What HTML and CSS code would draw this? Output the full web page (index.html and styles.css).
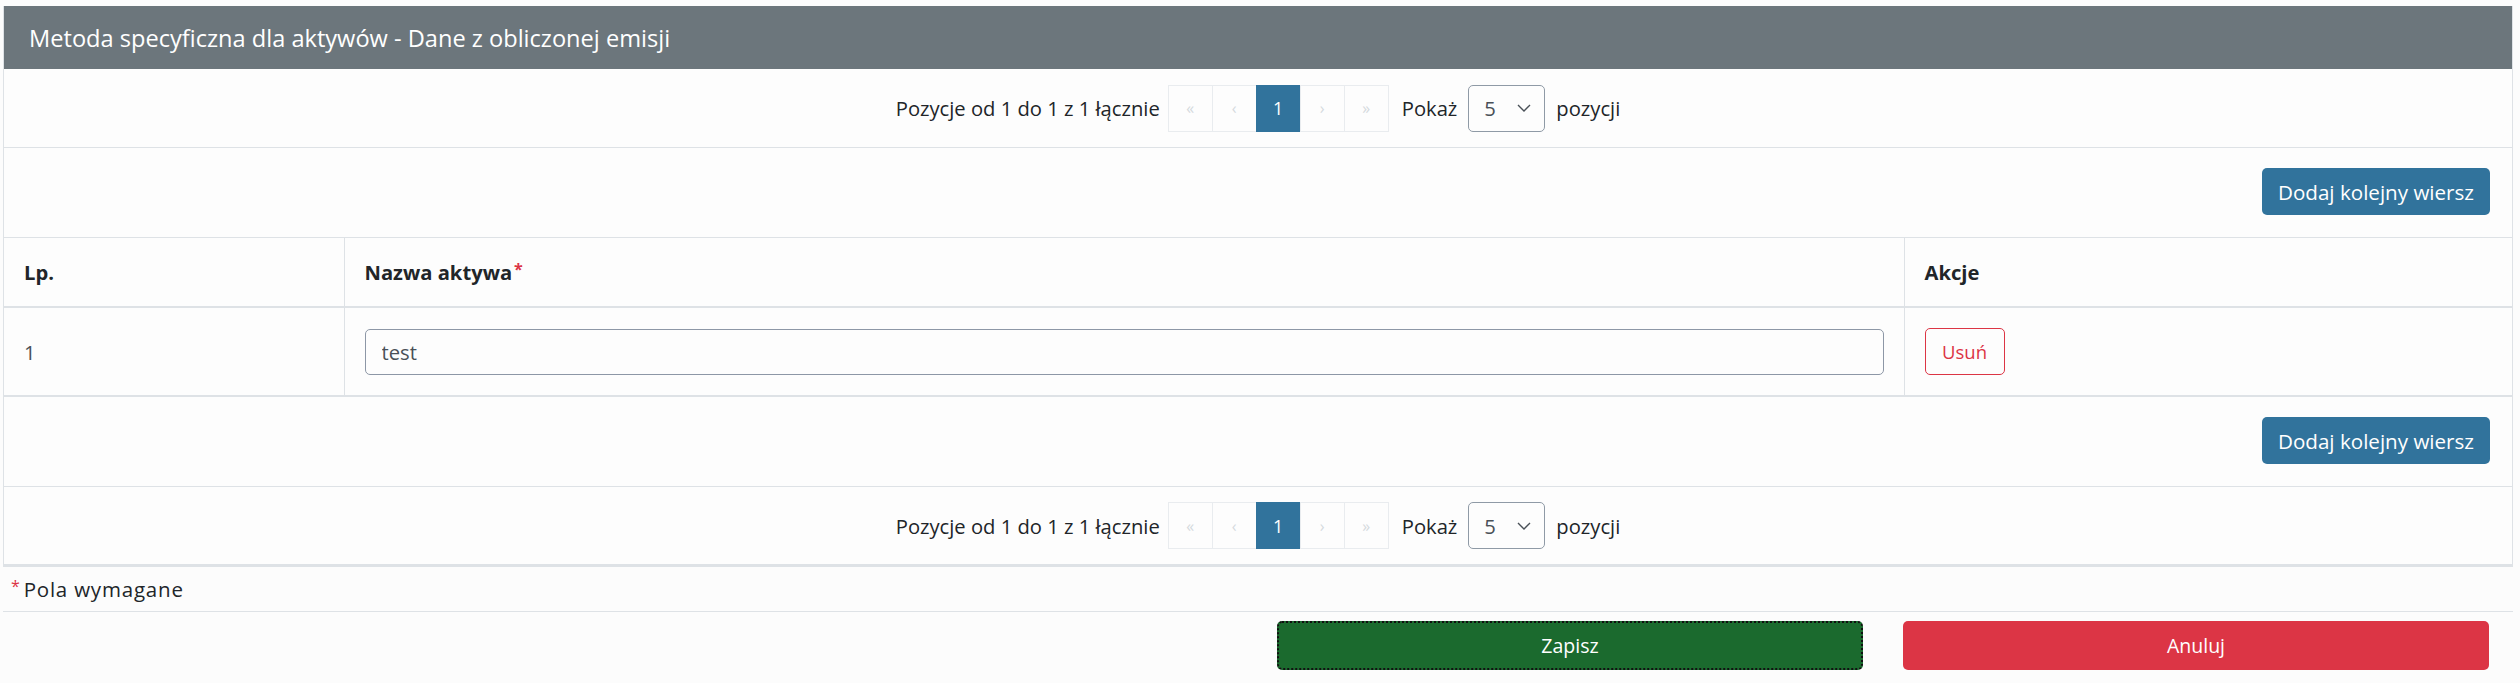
FILE: index.html
```html
<!DOCTYPE html>
<html lang="pl">
<head>
    <meta charset="UTF-8">
    <meta name="viewport" content="width=device-width, initial-scale=1.0">
    <title>Metoda specyficzna dla aktywów</title>
    <link rel="stylesheet" href="styles.css">
</head>
<body>
    <div class="panel">
        <div class="panel-heading">Metoda specyficzna dla aktywów - Dane z obliczonej emisji</div>

        <div class="pager-row">
            <span class="pager-info">Pozycje od 1 do 1 z 1 łącznie</span>
            <ul class="pagination">
                <li class="disabled">&laquo;</li>
                <li class="disabled">&lsaquo;</li>
                <li class="active">1</li>
                <li class="disabled">&rsaquo;</li>
                <li class="disabled">&raquo;</li>
            </ul>
            <span>Pokaż</span>
            <div class="page-size">
                <span>5</span>
                <svg width="14" height="8" viewBox="0 0 14 8"><path d="M1 1l6 6 6-6" fill="none" stroke="#495057" stroke-width="1.4"/></svg>
            </div>
            <span>pozycji</span>
        </div>

        <div class="actions-row">
            <button class="btn btn-primary">Dodaj kolejny wiersz</button>
        </div>

        <table class="grid">
            <colgroup>
                <col class="col-lp">
                <col>
                <col class="col-actions">
            </colgroup>
            <thead>
                <tr>
                    <th>Lp.</th>
                    <th>Nazwa aktywa<sup class="req">*</sup></th>
                    <th>Akcje</th>
                </tr>
            </thead>
            <tbody>
                <tr>
                    <td>1</td>
                    <td><input type="text" class="text-input" value="test"></td>
                    <td><button class="btn btn-outline-danger">Usuń</button></td>
                </tr>
            </tbody>
        </table>

        <div class="actions-row">
            <button class="btn btn-primary">Dodaj kolejny wiersz</button>
        </div>

        <div class="pager-row pager-row-last">
            <span class="pager-info">Pozycje od 1 do 1 z 1 łącznie</span>
            <ul class="pagination">
                <li class="disabled">&laquo;</li>
                <li class="disabled">&lsaquo;</li>
                <li class="active">1</li>
                <li class="disabled">&rsaquo;</li>
                <li class="disabled">&raquo;</li>
            </ul>
            <span>Pokaż</span>
            <div class="page-size">
                <span>5</span>
                <svg width="14" height="8" viewBox="0 0 14 8"><path d="M1 1l6 6 6-6" fill="none" stroke="#495057" stroke-width="1.4"/></svg>
            </div>
            <span>pozycji</span>
        </div>
    </div>

    <div class="required-note"><span class="req">*</span>Pola wymagane</div>

    <div class="form-footer">
        <button class="btn btn-save">Zapisz</button>
        <button class="btn btn-cancel">Anuluj</button>
    </div>
</body>
</html>
```

FILE: styles.css
```css
body {
    margin: 0;
    padding: 6px 7px 12px 3px;
    background: #fcfcfc;
    font-family: "Open Sans", Arial, sans-serif;
    font-size: 20.2px;
    color: #212529;
}
.panel {
    border: 1px solid #dee2e6;
    border-top: 0;
    background: #fdfdfd;
}
.panel-heading {
    height: 63px;
    background: #6c767c;
    color: #fff;
    font-size: 23.6px;
    padding: 0 25px;
    display: flex;
    align-items: center;
}
.pager-row {
    height: 78px;
    display: flex;
    align-items: center;
    justify-content: center;
    border-bottom: 1px solid #dee2e6;
}
.pager-row-last {
    height: 77px;
    border-bottom-width: 2px;
}
.pager-info {
    margin-right: 9px;
}
.pagination {
    display: flex;
    list-style: none;
    margin: 0 13px 0 0;
    padding: 0;
}
.pagination li {
    width: 45px;
    height: 47px;
    box-sizing: border-box;
    border: 1px solid #e9ecef;
    margin-left: -1px;
    display: flex;
    align-items: center;
    justify-content: center;
    color: #d5dade;
    font-size: 16px;
}
.pagination li.active {
    background: #31739c;
    border-color: #31739c;
    color: #fff;
    font-size: 18px;
}
.page-size {
    margin: 0 11px;
    width: 77px;
    height: 47px;
    box-sizing: border-box;
    border: 1px solid #8f9aa6;
    border-radius: 5px;
    display: flex;
    align-items: center;
    justify-content: space-between;
    padding: 0 13px 0 15px;
    color: #495057;
}
.actions-row {
    display: flex;
    justify-content: flex-end;
    padding: 20px 22px 22px;
    border-bottom: 1px solid #dee2e6;
}
.btn {
    font-family: inherit;
    font-size: 19px;
    height: 47px;
    border-radius: 5px;
    border: 0;
    cursor: pointer;
}
.btn-primary {
    background: #31739c;
    color: #fff;
    padding: 0 16px;
    font-size: 20.6px;
    font-weight: 500;
}
.grid {
    width: 100%;
    border-collapse: collapse;
    table-layout: fixed;
}
.col-lp {
    width: 340px;
}
.col-actions {
    width: 608px;
}
.grid th,
.grid td {
    text-align: left;
    padding: 0 20px;
    border-left: 1px solid #dee2e6;
}
.grid th:first-child,
.grid td:first-child {
    border-left: 0;
}
.grid th {
    height: 68px;
    border-bottom: 2px solid #dee2e6;
    font-weight: 700;
}
.grid td {
    height: 87px;
    border-bottom: 2px solid #dee2e6;
    color: #495057;
}
.req {
    color: #dc3545;
    font-size: 16px;
    vertical-align: top;
    margin-left: 2px;
}
.text-input {
    width: 100%;
    height: 46px;
    box-sizing: border-box;
    border: 1px solid #8d97a6;
    border-radius: 5px;
    padding: 0 16px;
    font: inherit;
    color: #495057;
    background: #fdfdfd;
}
.btn-outline-danger {
    background: transparent;
    border: 1.5px solid #dc3545;
    color: #dc3545;
    width: 80px;
    padding: 0;
    font-size: 18.5px;
}
.required-note {
    height: 36px;
    padding: 8px 0 0 8px;
    border-bottom: 1px solid #dee2e6;
    font-size: 20.5px;
    letter-spacing: 0.8px;
}
.required-note .req {
    margin: 0 3px 0 0;
}
.form-footer {
    display: flex;
    justify-content: flex-end;
    gap: 40px;
    padding: 9px 24px 0 0;
}
.btn-save,
.btn-cancel {
    width: 586px;
    height: 49px;
    color: #fff;
    font-size: 19.5px;
}
.btn-save {
    background: #1b6a2e;
    border: 2px dotted #111;
}
.btn-cancel {
    background: #dc3545;
}
```
